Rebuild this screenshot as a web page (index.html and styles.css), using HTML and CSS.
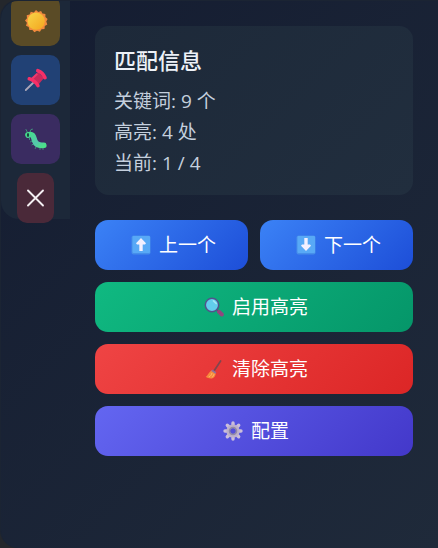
FILE: index.html
```html
<!DOCTYPE html>
<html lang="zh-CN">
<head>
<meta charset="utf-8">
<meta name="viewport" content="width=device-width, initial-scale=1">
<title>匹配信息</title>
<link rel="stylesheet" href="styles.css">
</head>
<body>
<div class="panel">
  <nav class="toolbar">
    <button class="tool tool-theme" type="button" aria-label="主题">
      <svg viewBox="0 0 24 24" width="24" height="24">
        <defs><linearGradient id="sun" x1="0" y1="0" x2="1" y2="1"><stop offset="0" stop-color="#f8d548"/><stop offset="1" stop-color="#f3a51f"/></linearGradient></defs>
        <path fill="#f18a3d" d="M12 1l2.3 2 2.8-1.1 1.3 2.7 3 .4v3l2.2 2-1.3 2.6 1 2.8-2.5 1.6-.3 3-3 .3-1.6 2.5-2.9-1-2.6 1.400-2-2.300-3 .1-.7-2.900L2 16.700l.9-2.900L1 11.500l2-2.200-.3-3 2.900-.8L6.800 2.700l3 .7z"/>
        <circle cx="12.200" cy="12.200" r="8.600" fill="url(#sun)"/>
      </svg>
    </button>
    <button class="tool tool-pin" type="button" aria-label="固定">
      <svg viewBox="0 0 24 24" width="24" height="24">
        <path d="M1.800 22L9 15" stroke="#aaa6b8" stroke-width="1.800" stroke-linecap="round"/>
        <path fill="#c92a5b" d="M8 10l6-5.500 6 5.500-5.500 6.500z"/>
        <path d="M5.300 10.800c3 .6 7.500 4.200 8.600 6.800" fill="none" stroke="#f62f67" stroke-width="3.600" stroke-linecap="round"/>
        <path d="M13.800 2.700c2.600 1 6 4.200 7.200 7" fill="none" stroke="#f62f67" stroke-width="3.600" stroke-linecap="round"/>
        <path d="M8.300 10.500l5-4.700" stroke="#f0386d" stroke-width="2"/>
      </svg>
    </button>
    <button class="tool tool-debug" type="button" aria-label="调试">
      <svg viewBox="0 0 24 24" width="24" height="24">
        <defs><linearGradient id="bug" x1="0" y1="0" x2="1" y2="1"><stop offset="0" stop-color="#46dc8d"/><stop offset=".65" stop-color="#55c6ac"/><stop offset="1" stop-color="#4be089"/></linearGradient></defs>
        <path d="M3.500 5.500L2 2.500M6 5l1-2.500 1.500-.3M5.500 11v1.500M8 14l-1.500.8M9.500 17l-1.500.8M12 20l-.7 1.500M16 21v1.500M19 21v1.500" fill="none" stroke="#42917d" stroke-width="1" stroke-linecap="round"/>
        <path d="M4 8C9.500 6 9.500 10.500 10.800 14c1.300 3.800 4.700 4.700 9 4.200" fill="none" stroke="url(#bug)" stroke-width="5.600" stroke-linecap="round"/>
        <ellipse cx="4" cy="8" rx="1.100" ry="1.900" fill="#17483f"/>
      </svg>
    </button>
    <button class="tool tool-close" type="button" aria-label="关闭">
      <svg viewBox="0 0 24 24" width="24" height="24"><path d="M4 4.500l15 15M19 4.500l-15 15" fill="none" stroke="#f4eff2" stroke-width="1.900" stroke-linecap="round"/></svg>
    </button>
  </nav>
  <main class="content">
    <section class="info">
      <h2>匹配信息</h2>
      <p>关键词: 9 个</p>
      <p>高亮: 4 处</p>
      <p>当前: 1 / 4</p>
    </section>
    <div class="actions">
      <button class="btn btn-nav" type="button">
        <svg viewBox="0 0 20 20" width="20" height="20"><rect x=".5" y=".5" width="19" height="19" rx="2" fill="#468eea"/><rect x="1.500" y="1" width="17.500" height="17" rx="1" fill="#58a9f6"/><path fill="#f3f0ff" d="M10 3l5 5.200-1 1.300h-2.300V16H8.300V9.500H6L5 8.200z"/></svg>
        <span>上一个</span>
      </button>
      <button class="btn btn-nav" type="button">
        <svg viewBox="0 0 20 20" width="20" height="20"><rect x=".5" y=".5" width="19" height="19" rx="2" fill="#468eea"/><rect x="1.500" y="1" width="17.500" height="17" rx="1" fill="#58a9f6"/><path fill="#f3f0ff" d="M10 16l5-5.200-1-1.300h-2.300V3H8.300v6.500H6l-1 1.300z"/></svg>
        <span>下一个</span>
      </button>
      <button class="btn btn-enable" type="button">
        <svg viewBox="0 0 20 20" width="20" height="20"><path d="M13 13l2 2" stroke="#554982" stroke-width="2"/><path d="M15 14.800l2.800 2.700" stroke="#92467f" stroke-width="4" stroke-linecap="round"/><circle cx="8" cy="8" r="6.700" fill="#62cdeb" stroke="#51548b" stroke-width="1.500"/><path d="M9.500 3.800l2.700 2.700" stroke="#a1e7f5" stroke-width="1.700" stroke-linecap="round"/></svg>
        <span>启用高亮</span>
      </button>
      <button class="btn btn-clear" type="button">
        <svg viewBox="0 0 20 20" width="20" height="20"><path d="M10 12l6.600-10" stroke="#80464e" stroke-width="1.700" stroke-linecap="round"/><path fill="#f78b3d" d="M8 11.200l3.700 2.500c.2 2.600-1.200 4.800-3.200 5.600-2.400.5-5-.1-6.800-1.500C4 16.500 5 12.500 8 11.200z"/><path d="M8 14c-.4 1.800-1.500 3-3 4M10 15c-.4 1.700-1.100 2.700-2.200 3.600" fill="none" stroke="#ffc16d" stroke-width=".8"/><path d="M7.800 11.200l4 2.700" stroke="#916e9b" stroke-width="1.800"/></svg>
        <span>清除高亮</span>
      </button>
      <button class="btn btn-config" type="button">
        <svg viewBox="0 0 20 20" width="20" height="20"><path d="M10 2v16M2 10h16M4.300 4.300l11.400 11.400M15.700 4.300L4.300 15.700" stroke="#cbbedb" stroke-width="3.400" stroke-linecap="round"/><circle cx="10" cy="10" r="4.800" fill="#5550d8" stroke="#bdb0cb" stroke-width="3.600"/><circle cx="10" cy="10" r="3.500" fill="none" stroke="#928aa4" stroke-width="1.600"/></svg>
        <span>配置</span>
      </button>
    </div>
  </main>
</div>
</body>
</html>
```

FILE: styles.css
```css
* {
  box-sizing: border-box;
}

body {
  margin: 0;
  background: #24272c;
  color: #fff;
  font-family: "Open Sans", "Noto Sans CJK SC", sans-serif;
}

button {
  border: 0;
  color: inherit;
  font: inherit;
  cursor: pointer;
}

svg {
  display: block;
  flex: none;
}

.panel {
  display: flex;
  align-items: flex-start;
  min-height: 100vh;
  border: solid #1b2433;
  border-width: 1px 0 0 1px;
  border-radius: 18px 0 0 18px;
  overflow: hidden;
  background: linear-gradient(135deg, #141c31, #1f2a3a);
}

.toolbar {
  display: flex;
  flex-direction: column;
  align-items: center;
  gap: 9px;
  flex: none;
  width: 69px;
  height: 218px;
  border-bottom-left-radius: 18px;
  background: #1c2839;
}

.tool {
  display: flex;
  align-items: center;
  justify-content: center;
  flex: none;
  width: 49px;
  height: 50px;
  padding: 0;
  border-radius: 10px;
}

.tool-theme {
  margin-top: -5px;
  background: #5a4b26;
}

.tool-pin {
  background: #214175;
}

.tool-debug {
  background: #3a2c61;
}

.tool-close {
  width: 37px;
  background: #4a2939;
}

.content {
  flex: 1;
  padding: 25px;
}

.info {
  margin-bottom: 25px;
  padding: 19px 19px 16px;
  border-radius: 14px;
  background: linear-gradient(135deg, #1d2939, #212e3e);
}

.info h2 {
  margin: 0 0 11px;
  color: #edf1f7;
  font-size: 22px;
  font-weight: 500;
  line-height: 30px;
}

.info p {
  margin: 0;
  color: #c4cfdd;
  font-size: 19px;
  line-height: 31px;
}

.actions {
  display: grid;
  grid-template-columns: 1fr 1fr;
  gap: 12px;
}

.btn {
  display: flex;
  align-items: center;
  justify-content: center;
  gap: 8px;
  grid-column: 1 / -1;
  height: 50px;
  padding: 0 8px 0 12px;
  border-radius: 13px;
  font-size: 19px;
  line-height: 28px;
}

.btn-nav {
  grid-column: auto;
  background: linear-gradient(135deg, #3b82f6, #1d4ed8);
}

.btn-enable {
  background: linear-gradient(135deg, #10b981, #059669);
}

.btn-clear {
  background: linear-gradient(135deg, #ef4444, #dc2626);
}

.btn-config {
  background: linear-gradient(135deg, #6366f1, #4338ca);
}
```
